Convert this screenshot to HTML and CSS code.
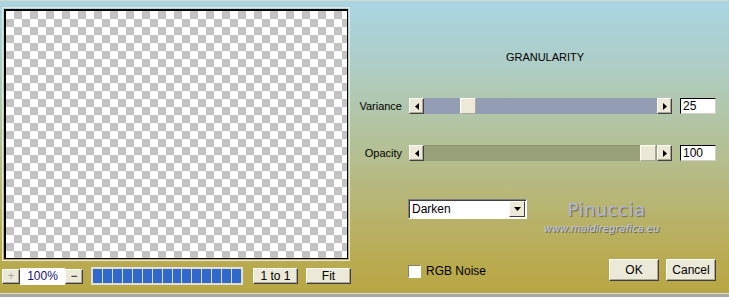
FILE: index.html
```html
<!DOCTYPE html>
<html lang="en">
<head>
    <meta charset="UTF-8">
    <title>Granularity</title>
    <link rel="stylesheet" href="styles.css">
</head>
<body>
    <div class="dialog">
        <div class="left">
            <div class="preview">
                <div class="canvas"></div>
            </div>
            <div class="zoombar">
                <button class="tool-btn" disabled>+</button>
                <input class="zoom-val" type="text" value="100%">
                <button class="tool-btn">&minus;</button>
                <div class="progress">
                    <span></span><span></span><span></span><span></span><span></span>
                    <span></span><span></span><span></span><span></span><span></span>
                    <span></span><span></span><span></span><span></span><span></span>
                </div>
                <button class="btn btn-one">1 to 1</button>
                <button class="btn btn-fit">Fit</button>
            </div>
        </div>

        <div class="right">
            <h1 class="title">GRANULARITY</h1>

            <div class="param-row param-first">
                <label class="param-label">Variance</label>
                <div class="slider">
                    <button class="arrow"><svg viewBox="0 0 4 7" width="4" height="7"><polygon points="4,0 4,7 0,3.5"></polygon></svg></button>
                    <div class="track track-blue">
                        <div class="thumb" style="left: 36px;"></div>
                    </div>
                    <button class="arrow"><svg viewBox="0 0 4 7" width="4" height="7"><polygon points="0,0 0,7 4,3.5"></polygon></svg></button>
                </div>
                <input class="value-box" type="text" value="25">
            </div>

            <div class="param-row param-second">
                <label class="param-label">Opacity</label>
                <div class="slider">
                    <button class="arrow"><svg viewBox="0 0 4 7" width="4" height="7"><polygon points="4,0 4,7 0,3.5"></polygon></svg></button>
                    <div class="track track-olive">
                        <div class="thumb" style="left: 216px;"></div>
                    </div>
                    <button class="arrow"><svg viewBox="0 0 4 7" width="4" height="7"><polygon points="0,0 0,7 4,3.5"></polygon></svg></button>
                </div>
                <input class="value-box" type="text" value="100">
            </div>

            <div class="select-row">
                <div class="dropdown">
                    <span class="dropdown-text">Darken</span>
                    <span class="dropdown-btn"><svg viewBox="0 0 7 4" width="7" height="4"><polygon points="0,0 7,0 3.5,4"></polygon></svg></span>
                </div>
                <div class="watermark">
                    <div class="wm-name">Pinuccia</div>
                    <div class="wm-url">www.maidiregrafica.eu</div>
                </div>
            </div>

            <div class="bottom-row">
                <input class="check" type="checkbox" id="rgb-noise">
                <label class="check-label" for="rgb-noise">RGB Noise</label>
                <button class="btn btn-ok">OK</button>
                <button class="btn btn-cancel">Cancel</button>
            </div>
        </div>
    </div>
</body>
</html>
```

FILE: styles.css
```css
        body {
            margin: 0;
            width: 729px;
            height: 297px;
            overflow: hidden;
            background-color: #a8a8a0;
            font-family: "Liberation Sans", Arial, sans-serif;
            font-size: 11px;
            color: #000;
        }

        .dialog {
            display: flex;
            box-sizing: border-box;
            height: 294px;
            border-top: 1px solid #d8d8d0;
            border-bottom: 1px solid #dcdcd6;
            background: linear-gradient(to bottom, #a9d5e3 0%, #adcfcc 18%, #b1c7ad 36%, #b4bf92 52%, #b7b572 70%, #b9ab52 88%, #b9a744 100%);
        }

        /* preview side */
        .left {
            width: 355px;
            padding-top: 6px;
        }

        .preview {
            box-sizing: border-box;
            width: 348px;
            height: 254px;
            margin-left: 2px;
            padding: 1px;
            border: 1px solid #e6e6de;
        }

        .canvas {
            box-sizing: border-box;
            height: 100%;
            border: 2px solid #000;
            border-right-width: 1px;
            border-bottom-width: 1px;
            background: conic-gradient(#c3c3c3 0 25%, #fff 0 50%, #c3c3c3 0 75%, #fff 0) 0 0 / 16px 16px;
        }

        .zoombar {
            display: flex;
            align-items: center;
            height: 18px;
            margin-top: 6px;
            padding-left: 2px;
        }

        .btn, .tool-btn, .arrow {
            box-sizing: border-box;
            padding: 0;
            background-color: #ece9d8;
            border: 1px solid;
            border-color: #fff #404040 #404040 #fff;
            box-shadow: inset -1px -1px 0 #aca899;
            font-family: "Liberation Sans", Arial, sans-serif;
            font-size: 12px;
            color: #000;
        }

        .tool-btn {
            width: 18px;
            height: 15px;
            line-height: 12px;
        }

        .tool-btn:disabled {
            color: #a8a8a0;
        }

        .zoom-val {
            box-sizing: border-box;
            width: 45px;
            height: 17px;
            padding: 0;
            border: none;
            background: #fff;
            text-align: center;
            font-family: "Liberation Sans", Arial, sans-serif;
            font-size: 12px;
            color: #14146e;
        }

        .progress {
            display: flex;
            gap: 1px;
            box-sizing: border-box;
            width: 152px;
            height: 18px;
            margin-left: 8px;
            padding: 1px;
            border: 1px solid #e2e2da;
            background: #dedcd0;
        }

        .progress span {
            width: 9px;
            background: #3068cc;
        }

        .btn {
            height: 16px;
        }

        .btn-one {
            width: 45px;
            margin-left: 10px;
        }

        .btn-fit {
            width: 45px;
            margin-left: 8px;
        }

        /* controls side */
        .right {
            flex: 1;
        }

        .title {
            margin: 49px 0 0;
            padding-left: 6px;
            text-align: center;
            font-size: 11px;
            font-weight: normal;
            line-height: 14px;
        }

        .param-row {
            display: flex;
            align-items: center;
            height: 16px;
        }

        .param-first {
            margin-top: 34px;
        }

        .param-second {
            margin-top: 31px;
        }

        .param-label {
            width: 47px;
            margin-right: 7px;
            text-align: right;
        }

        .slider {
            display: flex;
            width: 263px;
            height: 16px;
        }

        .arrow {
            display: flex;
            align-items: center;
            justify-content: center;
            width: 15px;
            height: 16px;
        }

        .arrow svg, .dropdown-btn svg {
            fill: #000;
        }

        .track {
            position: relative;
            flex: 1;
        }

        .track-blue {
            background: #939eb5;
        }

        .track-olive {
            background: #99a17b;
            border-top: 1px solid #8d9570;
        }

        .thumb {
            position: absolute;
            top: 0;
            bottom: 0;
            width: 16px;
            box-sizing: border-box;
            background: #ece9d8;
            border: 1px solid;
            border-color: #fff #aca899 #aca899 #fff;
        }

        .track-olive .thumb {
            top: -1px;
        }

        .value-box {
            box-sizing: border-box;
            width: 36px;
            height: 16px;
            margin-left: 8px;
            padding: 0 2px;
            background: #fff;
            border: 1px solid;
            border-color: #000 #d4d0c8 #d4d0c8 #000;
            font-family: "Liberation Sans", Arial, sans-serif;
            font-size: 12px;
            color: #000;
        }

        .select-row {
            display: flex;
            align-items: flex-start;
            margin-top: 38px;
            padding-left: 53px;
        }

        .dropdown {
            display: flex;
            align-items: center;
            justify-content: space-between;
            box-sizing: border-box;
            width: 119px;
            height: 20px;
            padding: 0 1px 0 3px;
            background: #fff;
            border: 1px solid;
            border-color: #808080 #fff #fff #808080;
            box-shadow: inset 1px 1px 0 #404040;
            font-size: 12px;
        }

        .dropdown-btn {
            display: flex;
            align-items: center;
            justify-content: center;
            box-sizing: border-box;
            width: 16px;
            height: 16px;
            background: #ece9d8;
            border: 1px solid;
            border-color: #fff #404040 #404040 #fff;
        }

        .watermark {
            width: 121px;
            margin-left: 14px;
            text-align: center;
        }

        .wm-name {
            padding-left: 10px;
            font-family: "DejaVu Sans", sans-serif;
            font-size: 18px;
            line-height: 22px;
            color: #b2b6de;
            letter-spacing: 0.5px;
            text-shadow: 1px 1px 1px #6c6a50;
        }

        .wm-url {
            margin-top: 2px;
            font-family: "DejaVu Sans", sans-serif;
            font-size: 10px;
            font-style: italic;
            line-height: 12px;
            color: #c0c3e2;
            text-shadow: 1px 1px 0 #6c6a50;
        }

        .bottom-row {
            display: flex;
            align-items: center;
            height: 22px;
            margin-top: 24px;
            padding-left: 53px;
            padding-right: 13px;
        }

        .check {
            appearance: none;
            box-sizing: border-box;
            width: 13px;
            height: 13px;
            margin: 2px 0 0;
            background: #fff;
            border: 1px solid;
            border-color: #808080 #fff #fff #808080;
        }

        .check-label {
            margin-left: 5px;
            margin-top: 2px;
            font-size: 12px;
        }

        .btn-ok, .btn-cancel {
            width: 50px;
            height: 22px;
        }

        .btn-ok {
            margin-left: auto;
        }

        .btn-cancel {
            margin-left: 7px;
        }
```
